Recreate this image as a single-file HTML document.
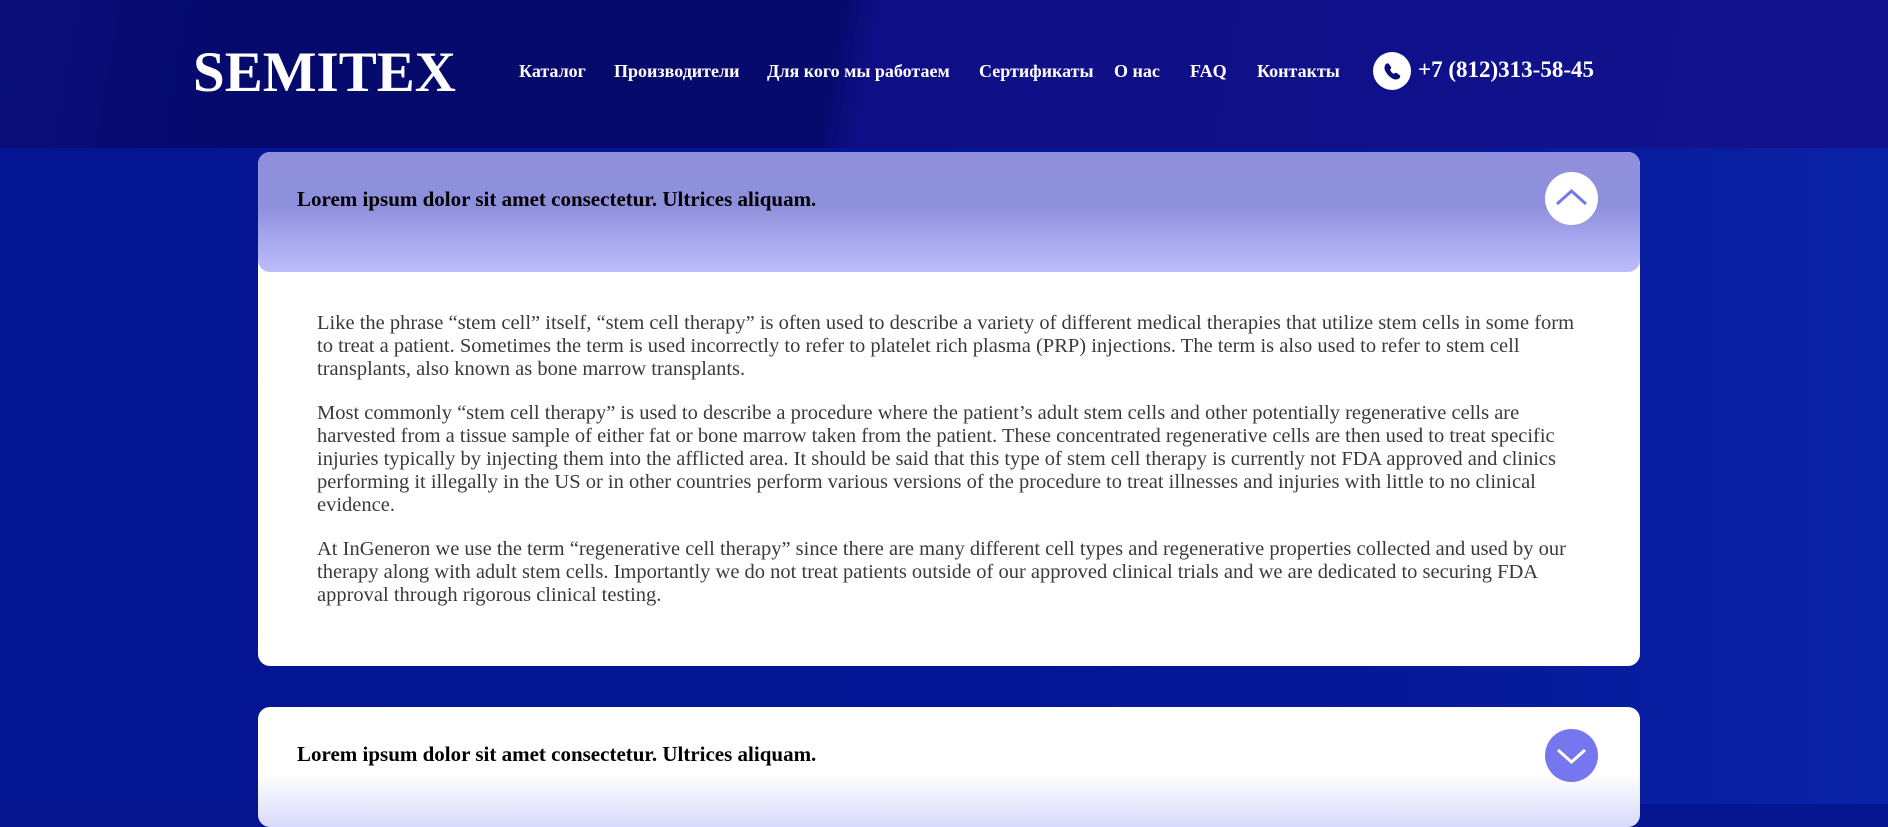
<!DOCTYPE html>
<html><head><meta charset="utf-8"><style>
*{margin:0;padding:0;box-sizing:border-box}
body{width:1888px;height:804px;overflow:hidden;background:#04158f;font-family:"Liberation Serif",serif;position:relative}
.hdr{position:absolute;left:0;top:0;width:1888px;height:148px;background:linear-gradient(100deg,#0b0e7a 0%,#050a6c 12%,#050a6c 44%,#0e0f86 46%,#12128e 100%)}
.main{position:absolute;left:0;top:148px;width:1888px;height:656px;background:linear-gradient(90deg,#031592 0%,#041796 70%,#0a22a6 100%)}
.logo{position:absolute;left:193px;top:40px;color:#fff;font-weight:bold;font-size:57px}
.nav{position:absolute;top:61px;color:#fff;font-weight:bold;font-size:18px}
.ph{position:absolute;left:1373px;top:52px;width:38px;height:38px;border-radius:50%;background:#fff}
.phone{position:absolute;left:1418px;top:57px;color:#fff;font-weight:bold;font-size:23px}
.card{position:absolute;left:258px;width:1382px;border-radius:12px;overflow:hidden;background:#fff}
.ch{height:120px;background:linear-gradient(180deg,#8f8fdb 0%,#8f90dc 45%,#bcbdfd 100%);position:relative;border-radius:12px}
.t{position:absolute;left:39px;top:35px;font-weight:bold;font-size:21px;color:#000}
.btn{position:absolute;left:1287px;top:20px;width:53px;height:53px;border-radius:50%}
.body{padding:40px 58px 0 59px;color:#3a3a3a;font-size:20.5px;line-height:22.9px}
.body p{margin-bottom:21.5px}
</style></head><body>
<div class="hdr"></div>
<div class="main"></div>
<div class="logo">SEMITEX</div>
<div class="nav" style="left:519px">Каталог</div>
<div class="nav" style="left:614px">Производители</div>
<div class="nav" style="left:767px">Для кого мы работаем</div>
<div class="nav" style="left:979px">Сертификаты</div>
<div class="nav" style="left:1114px">О нас</div>
<div class="nav" style="left:1190px">FAQ</div>
<div class="nav" style="left:1257px">Контакты</div>
<div class="ph"><svg width="38" height="38" viewBox="0 0 38 38"><path d="M13 12c1-1 2-1 3 0l2 3c.5 1 0 2-1 2.5 .5 2 2 3.5 4 4.5 .5-1 1.5-1.5 2.5-1l3 2c1 1 1 2 0 3-2 2-5 2-8 0-3-2-5-4.5-6.5-7.5-1-2.5-.5-5 1-6.5z" fill="#0a0d78"/></svg></div>
<div class="phone">+7 (812)313-58-45</div>

<div class="card" style="top:152px;height:514px">
 <div class="ch"><div class="t">Lorem ipsum dolor sit amet consectetur. Ultrices aliquam.</div>
  <div class="btn" style="background:#fff"><svg width="53" height="53" viewBox="0 0 53 53"><path d="M12 32 L26.5 19 L41 32" fill="none" stroke="#7577ee" stroke-width="3"/></svg></div></div>
 <div class="body">
 <p>Like the phrase “stem cell” itself, “stem cell therapy” is often used to describe a variety of different medical therapies that utilize stem cells in some form to treat a patient. Sometimes the term is used incorrectly to refer to platelet rich plasma (PRP) injections. The term is also used to refer to stem cell transplants, also known as bone marrow transplants.</p>
 <p>Most commonly “stem cell therapy” is used to describe a procedure where the patient’s adult stem cells and other potentially regenerative cells are harvested from a tissue sample of either fat or bone marrow taken from the patient. These concentrated regenerative cells are then used to treat specific injuries typically by injecting them into the afflicted area. It should be said that this type of stem cell therapy is currently not FDA approved and clinics performing it illegally in the US or in other countries perform various versions of the procedure to treat illnesses and injuries with little to no clinical evidence.</p>
 <p>At InGeneron we use the term “regenerative cell therapy” since there are many different cell types and regenerative properties collected and used by our therapy along with adult stem cells. Importantly we do not treat patients outside of our approved clinical trials and we are dedicated to securing FDA approval through rigorous clinical testing.</p>
 </div>
</div>

<div class="card" style="top:707px;height:120px;background:linear-gradient(180deg,#fff 0%,#fff 55%,#d9d9fb 100%)">
 <div class="t" style="top:35px">Lorem ipsum dolor sit amet consectetur. Ultrices aliquam.</div>
 <div class="btn" style="top:22px;background:#7677ee"><svg width="53" height="53" viewBox="0 0 53 53"><path d="M13 21 L26.5 33 L40 21" fill="none" stroke="#fff" stroke-width="3"/></svg></div>
</div>
</body></html>
